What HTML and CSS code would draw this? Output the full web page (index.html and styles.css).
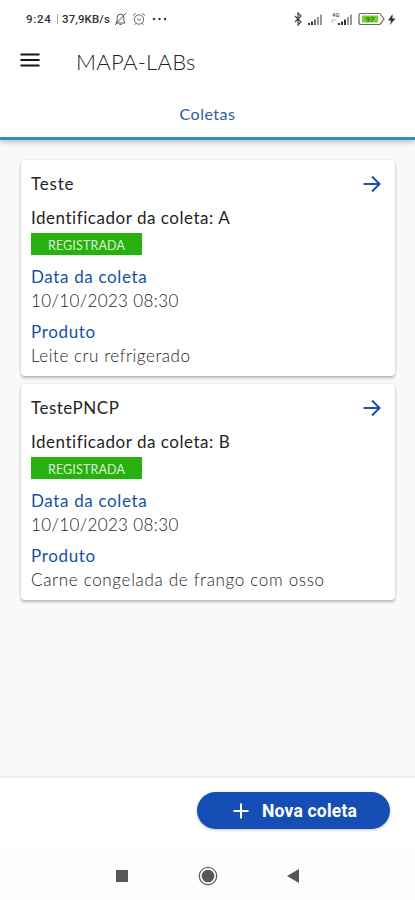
FILE: index.html
```html
<!DOCTYPE html>
<html lang="pt-BR">
<head>
<meta charset="utf-8">
<meta name="viewport" content="width=device-width, initial-scale=1">
<title>MAPA-LABs</title>
<link rel="stylesheet" href="styles.css">
</head>
<body>
<div class="app">
  <header class="header">
    <div class="status">
      <div class="status-left">
        <span class="clock">9:24</span><span class="divider"></span><span class="speed">37,9KB/s</span>
        <svg class="bell" width="13" height="14" viewBox="0 0 13 14" fill="none" stroke="#555"><path d="M2 11h9L9.800 9V5.500a3.300 3.300 0 0 0-6.600 0V9zM5.500 12.500h2M1 13L12 1"/></svg>
        <svg class="alarm" width="14" height="14" viewBox="0 0 14 14" fill="none" stroke="#666"><circle cx="7" cy="7.500" r="4.700"/><path d="M1 3.500L3.800 1.300M13 3.500l-2.800-2.200M4.800 6.500L7 8.300l2-1.500M3.500 11.500l-1 1.300M10.500 11.500l1 1.300"/></svg>
        <svg class="more" width="15" height="4" viewBox="0 0 15 4" fill="#333"><circle cx="2" cy="2" r="1.200"/><circle cx="7.500" cy="2" r="1.200"/><circle cx="13" cy="2" r="1.200"/></svg>
      </div>
      <svg class="status-right" width="106" height="16" viewBox="0 0 106 16">
        <path d="M2 5l6 6-3 3V2l3 3-6 6" fill="none" stroke="#444" stroke-width="1.200"/>
        <g fill="#333"><path d="M15 12h2v2h-2zM18 10.500h2V14h-2z"/><path d="M21 8.500h2V14h-2z" fill="#666"/><path d="M24 6h2v8h-2zM27 3.500h2V14h-2z" fill="#999"/></g>
        <text x="39" y="6" class="net">4G</text>
        <path d="M39 9h4M39 9v3" stroke="#bbb" fill="none"/>
        <g fill="#333"><path d="M45 12h2v2h-2zM48 10.500h2V14h-2z"/><path d="M51 8.500h2V14h-2z"/><path d="M54 6h2v8h-2zM57 3.500h2V14h-2z" fill="#999"/></g>
        <path d="M68 2.500h18q1.500 0 2 1.500l3 4-3 4q-.5 1.500-2 1.500H68q-2 0-2-2v-7q0-2 2-2z" fill="#fff" stroke="#666" stroke-width="1.200"/>
        <path d="M69 4.500h16v7H69z" fill="#70d52b"/>
        <text x="72.500" y="11" class="level">97</text>
        <path d="M99.500 3L95 9.500h3L97 14l5.500-6.500h-3z" fill="#333"/>
      </svg>
    </div>
    <div class="toolbar">
      <svg width="20" height="16" viewBox="0 0 20 16" stroke="#151515" stroke-width="2"><path d="M.5 2.500h19M.5 8h19M.5 13.500h19"/></svg>
      <h1 class="title">MAPA-LABs</h1>
    </div>
    <nav class="tabs"><span class="tab">Coletas</span></nav>
  </header>
  <main class="list">
    <article class="card">
      <div class="card-head"><h2 class="name name-short">Teste</h2>
        <svg class="arrow" width="20" height="18" viewBox="0 0 20 18" fill="none" stroke="#1b4fae" stroke-width="2"><path d="M1.500 9h16M10 1.500L17.500 9 10 16.500"/></svg></div>
      <p class="ident">Identificador da coleta: A</p>
      <span class="badge">REGISTRADA</span>
      <p class="label date-label">Data da coleta</p>
      <p class="value date">10/10/2023 08:30</p>
      <p class="label product-label">Produto</p>
      <p class="value product-short">Leite cru refrigerado</p>
    </article>
    <article class="card">
      <div class="card-head"><h2 class="name">TestePNCP</h2>
        <svg class="arrow" width="20" height="18" viewBox="0 0 20 18" fill="none" stroke="#1b4fae" stroke-width="2"><path d="M1.500 9h16M10 1.500L17.500 9 10 16.500"/></svg></div>
      <p class="ident">Identificador da coleta: B</p>
      <span class="badge">REGISTRADA</span>
      <p class="label date-label">Data da coleta</p>
      <p class="value date">10/10/2023 08:30</p>
      <p class="label product-label">Produto</p>
      <p class="value">Carne congelada de frango com osso</p>
    </article>
  </main>
  <footer class="footer">
    <button class="add"><svg width="16" height="16" viewBox="0 0 16 16" stroke="#fff" stroke-width="2"><path d="M8 .5v15M.5 8h15"/></svg><span>Nova coleta</span></button>
  </footer>
  <div class="navbar">
    <svg width="12" height="12" viewBox="0 0 12 12"><path fill="#575757" d="M0 0h12v12H0z"/></svg>
    <svg width="20" height="20" viewBox="0 0 20 20"><circle cx="10" cy="10" r="8.700" fill="none" stroke="#666" stroke-width="1.300"/><circle cx="10" cy="10" r="6.300" fill="#575757"/></svg>
    <svg width="12" height="14" viewBox="0 0 12 14"><path fill="#575757" d="M12 0v14L0 7z"/></svg>
  </div>
</div>
</body>
</html>
```
FILE: styles.css
```css
* { box-sizing: border-box; }
body { margin: 0; background: #fff; font-family: Lato, "Liberation Sans", sans-serif; }
h1, h2, p { margin: 0; font-weight: 400; white-space: nowrap; }
svg { display: block; flex: none; }
.app { width: 415px; height: 900px; display: flex; flex-direction: column; overflow: hidden; background: #f9f9f9; }
.header { height: 140px; flex: none; background: #fff; border-bottom: 3px solid #2492c8; box-shadow: 0 2px 5px rgba(0,0,0,.25); }
.status { height: 38px; padding: 0 16px 0 26px; display: flex; align-items: center; justify-content: space-between; }
.status-left { display: flex; align-items: center; font: 500 11.500px Roboto, sans-serif; color: #333; }
.clock { width: 28px; letter-spacing: .7px; }
.divider { width: 1px; height: 10px; background: #aaa; margin: 0 4px 0 3px; }
.speed { width: 52px; letter-spacing: .1px; }
.alarm { margin-left: 5px; }
.more { margin-left: 6px; }
.net { font: 700 6px Roboto, sans-serif; fill: #666; }
.level { font: 700 8px Roboto, sans-serif; fill: #387718; }
.toolbar { height: 44px; padding-left: 20px; display: flex; align-items: center; gap: 36px; }
.title { font-size: 22px; font-weight: 300; color: #222; letter-spacing: .3px; padding-top: 2px; }
.tabs { height: 54px; display: flex; justify-content: center; align-items: center; padding-top: 9px; }
.tab { font-size: 16px; color: #3159a5; letter-spacing: .5px; }
.list { flex: 1; padding: 20px 20px 0 21px; display: flex; flex-direction: column; gap: 8px; }
.card { height: 216px; padding: 13px 13px 0 10px; background: #fff; border-radius: 4px; box-shadow: 0 2px 3px rgba(0,0,0,.25), 0 0 3px rgba(0,0,0,.08); }
.card-head { height: 21px; display: flex; align-items: center; justify-content: space-between; }
.name, .ident, .label, .value { font-size: 17px; line-height: 24px; }
.name, .ident { color: #252525; }
.name { letter-spacing: .5px; padding-top: 1px; }
.name-short { letter-spacing: .8px; }
.ident { margin-top: 12px; letter-spacing: .53px; }
.badge { display: flex; align-items: center; justify-content: center; width: 111px; height: 22px; margin-top: 3px; padding-top: 2px; background: #27b110; color: #d9f4d2; font-size: 12.500px; letter-spacing: .15px; }
.label { color: #194fa5; letter-spacing: .65px; }
.date-label { margin-top: 10px; }
.product-label { margin-top: 7px; }
.value { font-weight: 300; color: #222; letter-spacing: .68px; }
.date { letter-spacing: .37px; }
.product-short { letter-spacing: .55px; }
.footer { height: 74px; flex: none; background: #fff; border-top: 2px solid #ebebeb; display: flex; justify-content: flex-end; padding: 14px 25px 0; }
.add { width: 193px; height: 37px; padding: 0 0 0 36px; border: 0; border-radius: 19px; background: #154fb5; color: #fff; display: flex; align-items: center; gap: 13px; font: 700 17.500px Roboto, sans-serif; letter-spacing: .2px; box-shadow: 0 1px 3px rgba(0,0,0,.25); white-space: nowrap; }
.navbar { height: 50px; flex: none; background: #fdfdfd; display: flex; align-items: center; justify-content: space-between; padding: 1px 116px 0; }
```
